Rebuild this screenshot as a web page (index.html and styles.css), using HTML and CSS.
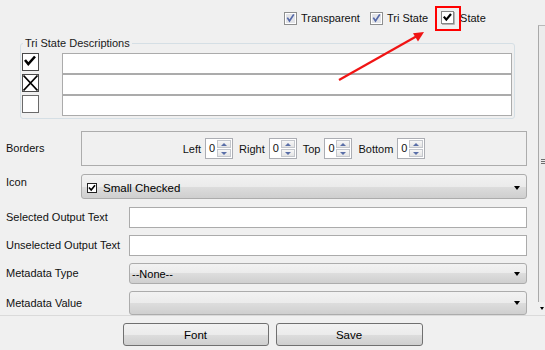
FILE: index.html
```html
<!doctype html>
<html lang="en">
<head>
  <meta charset="UTF-8">
  <meta name="viewport" content="width=device-width, initial-scale=1">
  <title>Check Box Properties</title>
  <link rel="stylesheet" href="styles.css">
</head>
<body>
  <div id="pane">
    <div id="content">
      <div class="options">
        <label class="opt">
          <svg class="cb" width="13" height="13" viewBox="0 0 13 13">
            <rect x="0.5" y="0.5" width="12" height="12" fill="#fff" stroke="#8e8f8f"/>
            <rect x="2" y="2" width="9" height="9" fill="#e3e4e8"/>
            <path d="M3.3 5.6 5.5 9 9.8 2.4" fill="none" stroke="#5569a8" stroke-width="1.7"/>
          </svg>
          Transparent
        </label>
        <label class="opt">
          <svg class="cb" width="13" height="13" viewBox="0 0 13 13">
            <rect x="0.5" y="0.5" width="12" height="12" fill="#fff" stroke="#8e8f8f"/>
            <rect x="2" y="2" width="9" height="9" fill="#e3e4e8"/>
            <path d="M3.3 5.6 5.5 9 9.8 2.4" fill="none" stroke="#5569a8" stroke-width="1.7"/>
          </svg>
          Tri State
        </label>
        <label class="opt opt-state">
          <svg class="cb" width="14" height="14" viewBox="0 0 14 14">
            <rect x="0.5" y="0.5" width="12" height="12" fill="#fff" stroke="#858585"/>
            <path d="M1 13.5H13.5V1" fill="none" stroke="#b4b4b4"/>
            <path d="M2.8 5.6 5.3 8.6 10 3" fill="none" stroke="#000" stroke-width="2.2"/>
          </svg>
          State
        </label>
      </div>

      <fieldset class="group">
        <legend>Tri State Descriptions</legend>
        <div class="tri-row">
          <svg class="tri-icon" width="17" height="18" viewBox="0 0 17 18">
            <rect x="0.5" y="0.5" width="16" height="17" fill="#fff" stroke="#4a4a4a"/>
            <path d="M3 7 6.3 11 13 3.5" fill="none" stroke="#000" stroke-width="2.6"/>
          </svg>
          <input class="field" type="text">
        </div>
        <div class="tri-row">
          <svg class="tri-icon" width="17" height="18" viewBox="0 0 17 18">
            <rect x="0.5" y="0.5" width="16" height="17" fill="#fff" stroke="#4a4a4a"/>
            <path d="M1.5 1.5 15.5 16.5M15.5 1.5 1.5 16.5" fill="none" stroke="#000" stroke-width="1.8"/>
          </svg>
          <input class="field" type="text">
        </div>
        <div class="tri-row">
          <svg class="tri-icon" width="17" height="18" viewBox="0 0 17 18">
            <rect x="0.5" y="0.5" width="16" height="17" fill="#fff" stroke="#6a6a6a"/>
          </svg>
          <input class="field" type="text">
        </div>
      </fieldset>

      <div class="row row-borders">
        <span class="label">Borders</span>
        <div class="borders-box">
          <span class="blabel">Left</span>
          <span class="spin"><span class="val">0</span><span class="arrows"><i class="up"></i><i class="down"></i></span></span>
          <span class="blabel">Right</span>
          <span class="spin"><span class="val">0</span><span class="arrows"><i class="up"></i><i class="down"></i></span></span>
          <span class="blabel">Top</span>
          <span class="spin"><span class="val">0</span><span class="arrows"><i class="up"></i><i class="down"></i></span></span>
          <span class="blabel">Bottom</span>
          <span class="spin"><span class="val">0</span><span class="arrows"><i class="up"></i><i class="down"></i></span></span>
        </div>
      </div>

      <div class="row row-icon">
        <span class="label">Icon</span>
        <div class="combo combo-icon">
          <svg class="small-cb" width="10" height="10" viewBox="0 0 10 10">
            <rect x="0.5" y="0.5" width="9" height="9" fill="#fff" stroke="#222"/>
            <path d="M2 4.4 4.2 7 8 2.2" fill="none" stroke="#000" stroke-width="1.6"/>
          </svg>
          <span>Small Checked</span>
          <span class="caret"></span>
        </div>
      </div>

      <div class="row wide">
        <span class="label">Selected Output Text</span>
        <input class="field" type="text">
      </div>
      <div class="row wide">
        <span class="label">Unselected Output Text</span>
        <input class="field" type="text">
      </div>
      <div class="row wide">
        <span class="label">Metadata Type</span>
        <div class="combo"><span>--None--</span><span class="caret"></span></div>
      </div>
      <div class="row wide last">
        <span class="label">Metadata Value</span>
        <div class="combo"><span></span><span class="caret"></span></div>
      </div>
    </div>

    <div id="vscroll">
      <div class="thumb"><span class="grip"></span></div>
      <div class="down-btn"><span class="caret small"></span></div>
    </div>
  </div>

  <div id="buttons">
    <button class="btn btn-font">Font</button>
    <button class="btn btn-save">Save</button>
  </div>

  <!-- annotation drawn over the dialog -->
  <div class="callout"></div>
  <svg class="arrow" width="545" height="350" viewBox="0 0 545 350">
    <line x1="339" y1="80" x2="417" y2="36" stroke="#f01414" stroke-width="2.2"/>
    <polygon points="424,32 413,33.2 418,41.6" fill="#f01414"/>
  </svg>
</body>
</html>
```

FILE: styles.css
```css
* {
  box-sizing: border-box;
}

body {
  margin: 0;
  width: 545px;
  height: 350px;
  overflow: hidden;
  position: relative;
  background: #f0f0f0;
  font-family: "Liberation Sans", Arial, sans-serif;
  font-size: 11px;
  color: #111;
}

#pane {
  display: flex;
  height: 316px;
  border-bottom: 1px solid #dadada;
}

#content {
  width: 538px;
}

/* top check boxes */
.options {
  height: 36px;
  display: flex;
  align-items: center;
  padding-left: 284px;
}
.opt {
  display: flex;
  align-items: center;
  gap: 4px;
  line-height: 13px;
}
.opt + .opt {
  margin-left: 10px;
}
.opt-state {
  gap: 5px;
}
.opt.opt-state {
  margin-left: 13px;
}
.cb {
  display: block;
}

/* tri state group */
.group {
  margin: 1px 23px 0 20px;
  padding: 3px 2px 2px 1px;
  border: 1px solid #d5dfe5;
  border-radius: 3px;
  min-width: 0;
}
.group legend {
  padding: 0 2px;
  margin-left: 1px;
  line-height: 13px;
  color: #1a1a1a;
}
.tri-row {
  display: flex;
  height: 21px;
}
.tri-icon {
  display: block;
  flex: none;
  margin-right: 23px;
}

.field {
  flex: 1;
  min-width: 0;
  height: 21px;
  margin: 0;
  padding: 0 3px;
  border: 1px solid #ababab;
  background: #fff;
  font: inherit;
  outline: none;
}

/* property rows */
.row {
  display: flex;
  align-items: center;
  padding: 0 11px 0 6px;
  margin-top: 7px;
}
.row .label {
  flex: none;
  width: 75px;
  line-height: 13px;
}
.row.wide .label {
  width: 123px;
}
.row-borders {
  margin-top: 12px;
}
.row-icon {
  margin-top: 8px;
  align-items: flex-start;
}
.row-icon .label {
  padding-top: 2px;
}
.row-icon + .row {
  margin-top: 8px;
}

.borders-box {
  flex: 1;
  height: 35px;
  border: 1px solid #acacac;
  display: flex;
  align-items: center;
  justify-content: center;
}
.blabel {
  margin-right: 4px;
}
.spin {
  display: flex;
  width: 28px;
  height: 21px;
  border: 1px solid #abadb3;
  background: #fff;
  margin-right: 6px;
}
.spin:last-child {
  margin-right: 0;
}
.spin .val {
  width: 11px;
  padding-left: 3px;
  line-height: 19px;
}
.arrows {
  width: 15px;
  display: flex;
  flex-direction: column;
  padding: 1px 1px 1px 0;
}
.arrows i {
  flex: 1;
  border: 1px solid #c3c6cc;
  background: linear-gradient(#f7f7f7, #e4e4e4);
  display: flex;
  align-items: center;
  justify-content: center;
}
.arrows i + i {
  margin-top: 1px;
}
.arrows i::before {
  content: "";
  border-left: 3px solid transparent;
  border-right: 3px solid transparent;
}
.arrows .up::before {
  border-bottom: 3px solid #5a6fa8;
}
.arrows .down::before {
  border-top: 3px solid #5a6fa8;
}

.combo {
  flex: 1;
  height: 21px;
  display: flex;
  align-items: center;
  padding-left: 2px;
  border: 1px solid #acacac;
  border-radius: 3px;
  background: linear-gradient(#f2f2f2 0%, #ebebeb 50%, #dddddd 50%, #cfcfcf 100%);
  color: #000;
}
.combo-icon {
  height: 25px;
  padding-left: 5px;
  padding-top: 3px;
  font-size: 11.5px;
}
.small-cb {
  display: block;
  margin-right: 6px;
}
.caret {
  margin-left: auto;
  margin-right: 6px;
  border-left: 3.5px solid transparent;
  border-right: 3.5px solid transparent;
  border-top: 4px solid #000;
}
.row.last {
  margin-top: 7px;
}
.row.last .combo {
  height: 24px;
}

/* clipped vertical scroll bar */
#vscroll {
  width: 7px;
  padding-top: 25px;
  display: flex;
  flex-direction: column;
}
.thumb {
  height: 277px;
  border-left: 1px solid #a9a9a9;
  border-top: 1px solid #b9b9b9;
  background: #ececec;
  display: flex;
  align-items: center;
  padding-left: 2px;
}
.grip {
  width: 4px;
  height: 5px;
  margin-bottom: 6px;
  background: repeating-linear-gradient(#6f6f6f 0 1px, transparent 1px 2px);
}
.down-btn {
  flex: 1;
  display: flex;
  align-items: center;
  padding-left: 2px;
}
.caret.small {
  margin: 0;
  border-left-width: 2.5px;
  border-right-width: 2.5px;
  border-top-width: 3px;
}

/* bottom buttons */
#buttons {
  display: flex;
  justify-content: center;
  gap: 7px;
  padding-top: 7px;
}
.btn {
  height: 23px;
  margin: 0;
  padding: 0;
  border: 1px solid #707070;
  border-radius: 3px;
  background: linear-gradient(#f2f2f2 0%, #ebebeb 50%, #dddddd 50%, #cfcfcf 100%);
  font: inherit;
  font-size: 11.5px;
  color: #000;
}
.btn-font {
  width: 146px;
}
.btn-save {
  width: 147px;
}

/* red annotation */
.callout {
  position: absolute;
  left: 435px;
  top: 6px;
  width: 26px;
  height: 25px;
  border: 2px solid #f00;
}
.arrow {
  position: absolute;
  left: 0;
  top: 0;
  pointer-events: none;
}
```
